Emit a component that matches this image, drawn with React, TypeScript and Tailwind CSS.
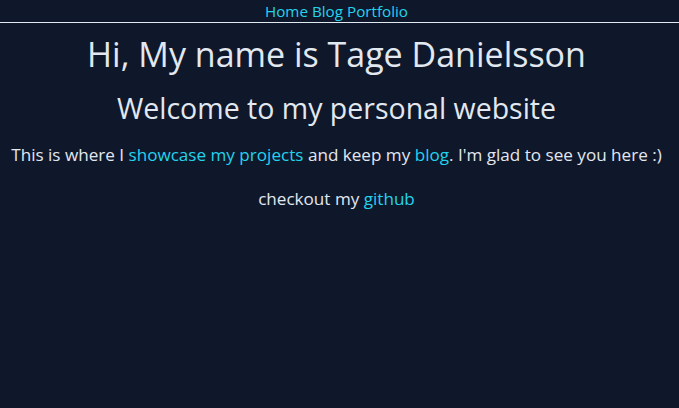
export default function App() {
  return (
    <div className="min-h-screen w-full bg-[#0f172a] text-[#e2e8f0] text-center" style={{ fontFamily: '"Open Sans", "Noto Sans", sans-serif' }}>
      <nav className="border-b border-[#e2e8f0] h-[23px] flex items-center justify-center text-[15.2px] leading-[20px] text-[#22d3ee] gap-[4px] pr-[6px]">
        <a>Home</a>
        <a>Blog</a>
        <a>Portfolio</a>
      </nav>
      <div className="pr-[6px]">
        <h1 className="text-[34px] leading-[40px] mt-[11px]">Hi, My name is Tage Danielsson</h1>
        <h2 className="text-[28.5px] leading-[36px] mt-[16px]">Welcome to my personal website</h2>
        <p className="text-[17.1px] leading-[24px] mt-[17px] whitespace-nowrap">
          This is where I <a className="text-[#22d3ee]">showcase my projects</a> and keep my <a className="text-[#22d3ee]">blog</a>. I'm glad to see you here :)
        </p>
        <p className="text-[17.1px] leading-[24px] mt-[20px]">
          checkout my <a className="text-[#22d3ee]">github</a>
        </p>
      </div>
    </div>
  );
}
